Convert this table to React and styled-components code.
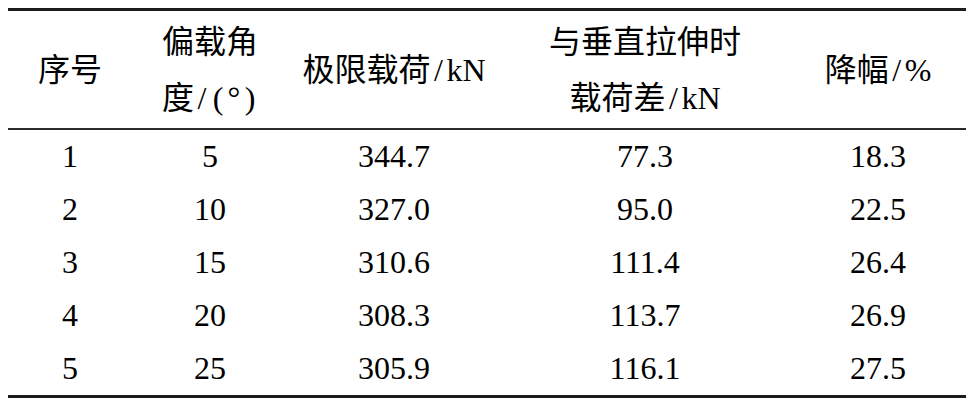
import React from "react";
import styled, { createGlobalStyle } from "styled-components";

const rows = [
    ["1", "5", "344.7", "77.3", "18.3"],
    ["2", "10", "327.0", "95.0", "22.5"],
    ["3", "15", "310.6", "111.4", "26.4"],
    ["4", "20", "308.3", "113.7", "26.9"],
    ["5", "25", "305.9", "116.1", "27.5"],
];

const widths = [124, 156, 212, 290, 176];

export default () => {
    return (
        <>
            <GlobalStyle />
            <TableStyled>
                <colgroup>
                    {widths.map((w, i) => <col key={i} style={{ width: w }} />)}
                </colgroup>
                <thead>
                    <tr>
                        <HeadCell>序号</HeadCell>
                        <HeadCell>
                            偏载角<br />
                            度<Punct>/</Punct><Punct>(</Punct><Punct>°</Punct><Punct>)</Punct>
                        </HeadCell>
                        <HeadCell>极限载荷<Punct>/</Punct>kN</HeadCell>
                        <HeadCell>
                            与垂直拉伸时<br />
                            载荷差<Punct>/</Punct>kN
                        </HeadCell>
                        <HeadCell>降幅<Punct>/</Punct>%</HeadCell>
                    </tr>
                </thead>
                <tbody>
                    {rows.map((row, index) => (
                        <tr key={index}>
                            {row.map((value, i) => <BodyCell key={i}>{value}</BodyCell>)}
                        </tr>
                    ))}
                </tbody>
            </TableStyled>
        </>
    );
}

const GlobalStyle = createGlobalStyle`
body {
    margin: 8px;
    background: #fff;
}
`

const TableStyled = styled.table`
width: 958px;
table-layout: fixed;
border-collapse: collapse;
font-family: "Liberation Serif", "Noto Sans CJK SC", serif;
font-size: 32px;
color: #000;
border-top: 3px solid #1c1c1c;
border-bottom: 3px solid #1c1c1c;
`

const HeadCell = styled.th`
font-weight: normal;
text-align: center;
vertical-align: middle;
height: 117px;
padding: 0;
line-height: 56px;
border-bottom: 2px solid #2a2a2a;
`

const Punct = styled.span`
display: inline-block;
width: 0.5em;
text-align: center;
`

const BodyCell = styled.td`
text-align: center;
vertical-align: middle;
height: 53px;
padding: 0;
line-height: 53px;
`
